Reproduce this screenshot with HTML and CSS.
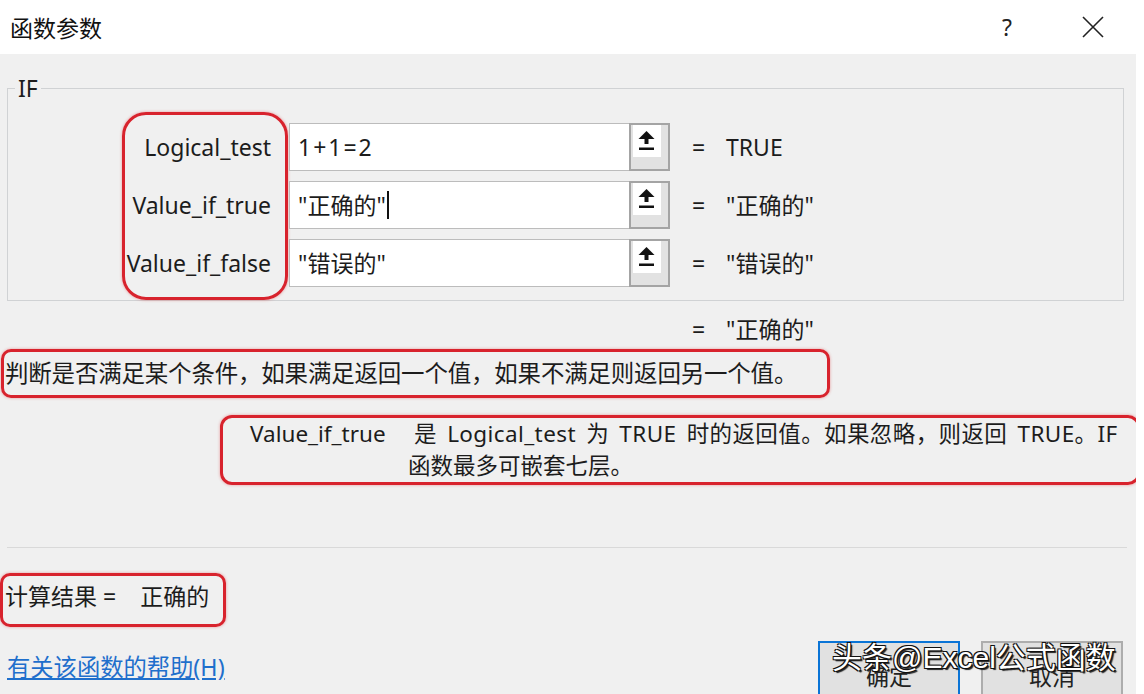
FILE: index.html
```html
<!DOCTYPE html>
<html lang="zh-CN">
<head>
  <meta charset="UTF-8">
  <title>函数参数</title>
  <link rel="stylesheet" href="styles.css">
</head>
<body>
  <div class="titlebar">
    <span class="title">函数参数</span>
    <span class="help-btn">?</span>
    <span class="close-btn">
      <svg width="22" height="22" viewBox="0 0 22 22"><path d="M1 1 L21 21 M21 1 L1 21" stroke="#222" stroke-width="1.6" fill="none"/></svg>
    </span>
  </div>

  <div class="dialog">
    <fieldset class="args">
      <legend>IF</legend>
      <div class="arg-grid">
        <div class="labels marked">
          <div class="label">Logical_test</div>
          <div class="label">Value_if_true</div>
          <div class="label">Value_if_false</div>
        </div>

        <div class="fields">
          <div class="field">
            <div class="input"><span class="expr">1+1=2</span></div>
            <div class="ref-btn"><span class="ref-icon"><svg width="28" height="32" viewBox="0 0 28 32"><path d="M13.5 6 L5.5 14 H11.5 V19 H15.5 V14 H21.5 Z" fill="#111"/><rect x="6" y="22.5" width="15" height="2.5" fill="#111"/></svg></span></div>
          </div>
          <div class="field">
            <div class="input">"正确的"<span class="caret"></span></div>
            <div class="ref-btn"><span class="ref-icon"><svg width="28" height="32" viewBox="0 0 28 32"><path d="M13.5 6 L5.5 14 H11.5 V19 H15.5 V14 H21.5 Z" fill="#111"/><rect x="6" y="22.5" width="15" height="2.5" fill="#111"/></svg></span></div>
          </div>
          <div class="field">
            <div class="input">"错误的"</div>
            <div class="ref-btn"><span class="ref-icon"><svg width="28" height="32" viewBox="0 0 28 32"><path d="M13.5 6 L5.5 14 H11.5 V19 H15.5 V14 H21.5 Z" fill="#111"/><rect x="6" y="22.5" width="15" height="2.5" fill="#111"/></svg></span></div>
          </div>
        </div>

        <div class="results">
          <div class="result"><span class="eq">=</span><span>TRUE</span></div>
          <div class="result"><span class="eq">=</span><span>"正确的"</span></div>
          <div class="result"><span class="eq">=</span><span>"错误的"</span></div>
        </div>
      </div>
    </fieldset>

    <div class="formula-result"><span class="eq">=</span><span>"正确的"</span></div>

    <p class="summary marked">判断是否满足某个条件，如果满足返回一个值，如果不满足则返回另一个值。</p>

    <div class="arg-help marked">
      <span class="arg-name">Value_if_true</span>
      <span class="arg-desc"><span class="first-line">是 Logical_test 为 TRUE 时的返回值。如果忽略，则返回 TRUE。IF</span><br>函数最多可嵌套七层。</span>
    </div>

    <hr class="sep">

    <div class="calc marked">计算结果 =<span class="calc-value">正确的</span></div>

    <div class="footer">
      <a class="help-link" href="#">有关该函数的帮助(H)</a>
      <div class="buttons">
        <button class="btn primary">确定</button>
        <button class="btn">取消</button>
      </div>
    </div>
  </div>

  <div class="watermark">头条@Excel公式函数</div>
</body>
</html>
```

FILE: styles.css
```css
body {
  margin: 0;
  width: 1144px;
  height: 694px;
  overflow: hidden;
  position: relative;
  background-color: #fff;
  font-family: "Noto Sans", "Noto Sans CJK SC", sans-serif;
  font-size: 23px;
  color: #1c1c1c;
}
.titlebar {
  height: 54px;
  display: flex;
  align-items: center;
  padding-left: 10px;
  background-color: #fff;
}
.title {
  flex: 1;
  color: #111;
}
.help-btn {
  font-size: 23px;
  margin-right: 70px;
  color: #222;
}
.close-btn {
  display: flex;
  margin-right: 40px;
}
.dialog {
  width: 1136px;
  height: 640px;
  background-color: #f0f0f0;
  overflow: hidden;
}
.marked {
  border: 3px solid #d8232d;
  box-shadow: 0 0 3px rgba(220, 40, 45, 0.45);
}

/* argument group */
.args {
  margin: 20px 12px 0 7px;
  padding: 0;
  border: 1px solid #d0d2d4;
  min-width: 0;
}
.args legend {
  margin-left: 7px;
  padding: 0 3px;
  line-height: 28px;
}
.arg-grid {
  display: flex;
  align-items: flex-start;
  padding-top: 10px;
}
.labels {
  margin-left: 114px;
  width: 146px;
  padding: 8px 14px 10px 0;
  border-radius: 24px;
  display: flex;
  flex-direction: column;
  gap: 10px;
}
.label {
  height: 48px;
  line-height: 48px;
  text-align: right;
  white-space: nowrap;
}
.fields {
  margin: 11px 0 0 1px;
  display: flex;
  flex-direction: column;
  gap: 10px;
}
.field {
  display: flex;
  width: 381px;
  height: 48px;
}
.input {
  flex: 1;
  background-color: #fff;
  border: 1px solid #bcbcbc;
  border-right: none;
  padding-left: 8px;
  line-height: 46px;
  display: flex;
  align-items: center;
}
.expr {
  letter-spacing: 2px;
}
.caret {
  display: inline-block;
  width: 2px;
  height: 28px;
  background-color: #111;
  margin-left: 1px;
}
.ref-btn {
  width: 35px;
  border: 2px solid #a4a4a4;
  background-color: #e2e2e2;
  display: flex;
  align-items: flex-start;
  padding-left: 2px;
}
.ref-icon {
  display: flex;
  background-color: #fff;
}
.results {
  margin-top: 11px;
  display: flex;
  flex-direction: column;
  gap: 10px;
}
.result {
  height: 48px;
  line-height: 48px;
  display: flex;
}
.eq {
  margin-left: 22px;
  width: 34px;
}
.formula-result {
  margin-top: 13px;
  padding-left: 670px;
  line-height: 30px;
  display: flex;
}

/* descriptions */
.summary {
  margin: 5px 0 0 1px;
  width: 822px;
  height: 43px;
  line-height: 43px;
  padding-left: 1px;
  border-radius: 10px;
  white-space: nowrap;
  font-size: 23.5px;
  letter-spacing: -0.2px;
}
.arg-help {
  margin: 17px 0 0 220px;
  width: 914px;
  display: flex;
  line-height: 32px;
  border-radius: 12px;
  font-size: 22.5px;
}
.arg-name {
  width: 158px;
  padding-left: 27px;
  flex-shrink: 0;
}
.arg-desc {
  white-space: nowrap;
}
.first-line {
  margin-left: 6px;
  word-spacing: 4px;
  letter-spacing: 0.4px;
}
.sep {
  margin: 62px 9px 0 7px;
  border: none;
  border-top: 1px solid #d9d9d9;
}

/* bottom */
.calc {
  margin-top: 25px;
  width: 218px;
  padding: 5px 0 13px 2px;
  line-height: 30px;
  border-radius: 10px;
  white-space: nowrap;
}
.calc-value {
  margin-left: 24px;
}
.footer {
  margin-top: 14px;
  display: flex;
  justify-content: space-between;
  padding: 0 13px 0 7px;
}
.help-link {
  margin-top: 11px;
  line-height: 30px;
  height: 30px;
  color: #1f6fcc;
  text-decoration: underline;
  font-size: 23.3px;
}
.buttons {
  display: flex;
  gap: 21px;
}
.btn {
  width: 142px;
  height: 68px;
  border: 2px solid #adadad;
  background-color: #e1e1e1;
  font-family: "Noto Sans CJK SC", sans-serif;
  font-size: 23px;
  color: #222;
}
.btn.primary {
  border-color: #0a74d6;
}
.watermark {
  position: absolute;
  left: 832px;
  top: 638px;
  font-family: "Liberation Sans", "Noto Sans CJK SC", sans-serif;
  font-size: 30px;
  line-height: 40px;
  color: #fff;
  text-shadow: 1px 1px 0 #111, -1px -1px 0 #111, 1px -1px 0 #111, -1px 1px 0 #111, 2px 2px 1px #222;
  white-space: nowrap;
}
```
